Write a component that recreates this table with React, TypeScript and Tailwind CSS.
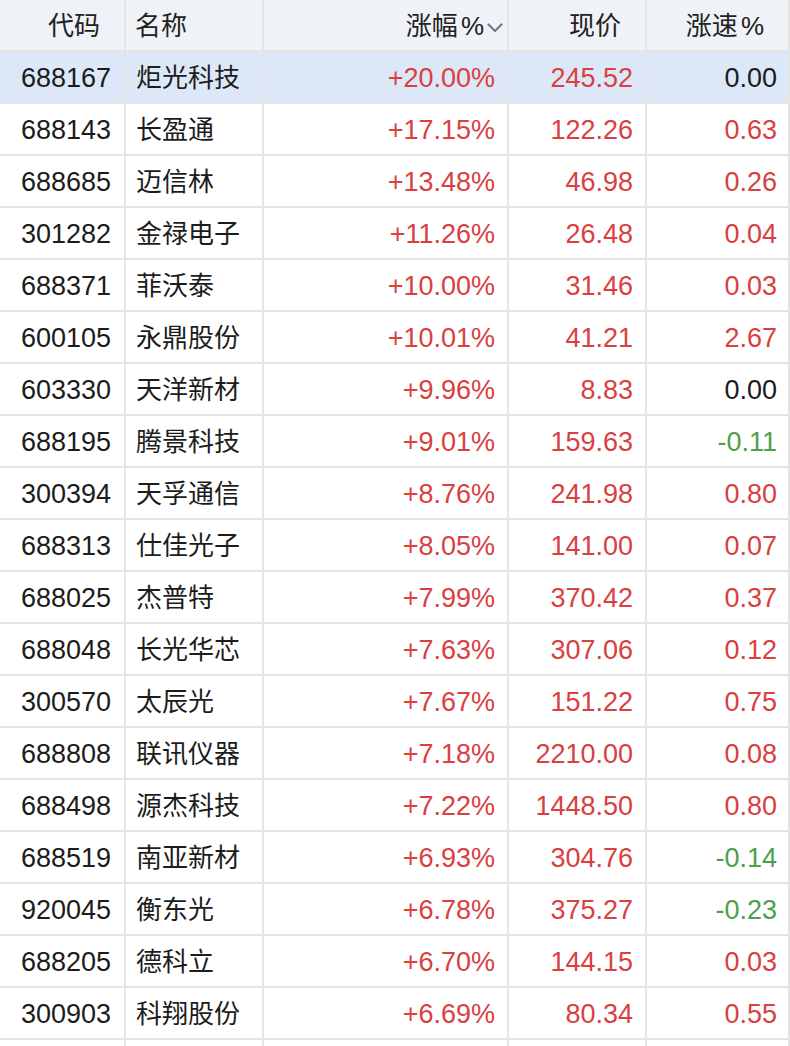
import React from "react";

type Row = { code: string; name: string; pct: string; price: string; speed: string };

const rows: Row[] = [
  { code: "688167", name: "炬光科技", pct: "+20.00%", price: "245.52", speed: "0.00" },
  { code: "688143", name: "长盈通", pct: "+17.15%", price: "122.26", speed: "0.63" },
  { code: "688685", name: "迈信林", pct: "+13.48%", price: "46.98", speed: "0.26" },
  { code: "301282", name: "金禄电子", pct: "+11.26%", price: "26.48", speed: "0.04" },
  { code: "688371", name: "菲沃泰", pct: "+10.00%", price: "31.46", speed: "0.03" },
  { code: "600105", name: "永鼎股份", pct: "+10.01%", price: "41.21", speed: "2.67" },
  { code: "603330", name: "天洋新材", pct: "+9.96%", price: "8.83", speed: "0.00" },
  { code: "688195", name: "腾景科技", pct: "+9.01%", price: "159.63", speed: "-0.11" },
  { code: "300394", name: "天孚通信", pct: "+8.76%", price: "241.98", speed: "0.80" },
  { code: "688313", name: "仕佳光子", pct: "+8.05%", price: "141.00", speed: "0.07" },
  { code: "688025", name: "杰普特", pct: "+7.99%", price: "370.42", speed: "0.37" },
  { code: "688048", name: "长光华芯", pct: "+7.63%", price: "307.06", speed: "0.12" },
  { code: "300570", name: "太辰光", pct: "+7.67%", price: "151.22", speed: "0.75" },
  { code: "688808", name: "联讯仪器", pct: "+7.18%", price: "2210.00", speed: "0.08" },
  { code: "688498", name: "源杰科技", pct: "+7.22%", price: "1448.50", speed: "0.80" },
  { code: "688519", name: "南亚新材", pct: "+6.93%", price: "304.76", speed: "-0.14" },
  { code: "920045", name: "衡东光", pct: "+6.78%", price: "375.27", speed: "-0.23" },
  { code: "688205", name: "德科立", pct: "+6.70%", price: "144.15", speed: "0.03" },
  { code: "300903", name: "科翔股份", pct: "+6.69%", price: "80.34", speed: "0.55" },
];

const speedColor = (s: string) => {
  const v = parseFloat(s);
  if (v > 0) return "text-[#d9403f]";
  if (v < 0) return "text-[#4c9f4c]";
  return "text-[#1c1c1c]";
};

const grid = "grid grid-cols-[126px_138px_245px_138px_1fr]";
const cell = "h-[52px] flex items-center pt-[2px] border-b-2 border-r-2 border-[#e4e4e4]";
const num = "text-[27px]";

export default function App() {
  return (
    <div
      className="w-[790px] h-[1046px] overflow-hidden bg-white text-[26px] text-[#1c1c1c]"
      style={{ fontFamily: '"Liberation Sans", "Noto Sans CJK SC", sans-serif' }}
    >
      <div className={`${grid} bg-[#eff2f6] text-[#222]`}>
        <div className={`${cell} justify-end pr-[24px]`}>代码</div>
        <div className={`${cell} pl-[9px]`}>名称</div>
        <div className={`${cell} justify-end pr-[4px]`}>
          <span>涨幅</span>
          <span className="ml-[3px]">%</span>
          <svg width="16" height="10" viewBox="0 0 16 10" className="ml-[3px] mt-[4px]">
            <polyline points="1.5,1.5 8,8 14.5,1.5" fill="none" stroke="#6d7b90" strokeWidth="2.2" strokeLinecap="round" strokeLinejoin="round" />
          </svg>
        </div>
        <div className={`${cell} justify-end pr-[24px]`}>现价</div>
        <div className={`${cell} justify-end pr-[24px] border-r-0`}>
          <span>涨速</span>
          <span className="ml-[3px]">%</span>
        </div>
      </div>
      {rows.map((r, i) => (
        <div key={r.code} className={`${grid} ${i === 0 ? "bg-[#dce8f8]" : "bg-white"}`}>
          <div className={`${cell} ${num} justify-end pr-[13px]`}>{r.code}</div>
          <div className={`${cell} pl-[10px]`}>{r.name}</div>
          <div className={`${cell} ${num} justify-end pr-[12px] text-[#d9403f]`}>{r.pct}</div>
          <div className={`${cell} ${num} justify-end pr-[12px] text-[#d9403f]`}>{r.price}</div>
          <div className={`${cell} ${num} justify-end pr-[11px] border-r-0 ${speedColor(r.speed)}`}>{r.speed}</div>
        </div>
      ))}
      <div className={grid}>
        <div className={cell}></div>
        <div className={cell}></div>
        <div className={cell}></div>
        <div className={cell}></div>
        <div className={`${cell} border-r-0`}></div>
      </div>
    </div>
  );
}
